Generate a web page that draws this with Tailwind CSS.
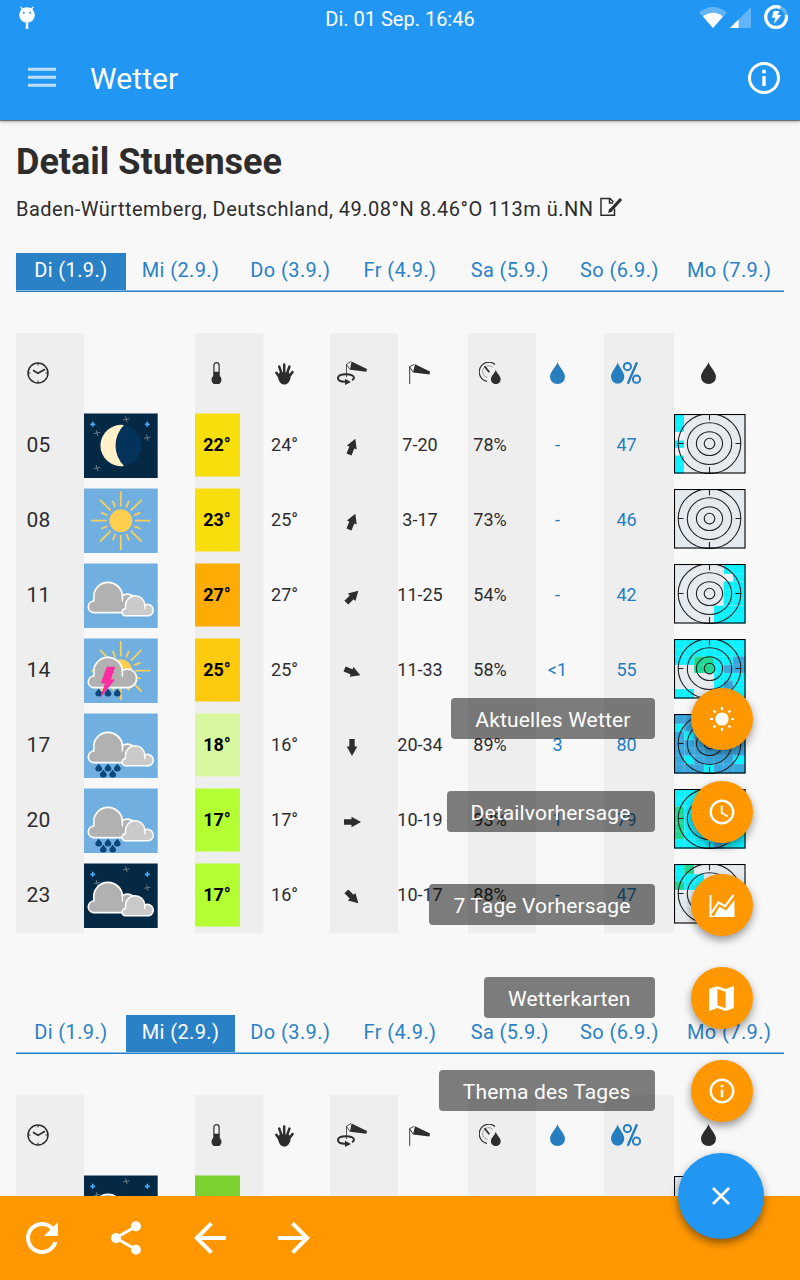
<!DOCTYPE html>
<html lang="de">
<head>
<meta charset="utf-8">
<meta name="viewport" content="width=device-width, initial-scale=1">
<title>Wetter</title>
<script src="https://cdn.jsdelivr.net/npm/@tailwindcss/browser@4"></script>
</head>
<body class="bg-[#f8f8f8]">
<svg width="0" height="0" class="absolute">
  <defs>
    <symbol id="drop" viewBox="0 0 15 22"><path d="M7.500 0C8.400 4.500 15 9.500 15 14.800A7.500 7.200 0 0 1 0 14.800C0 9.500 6.600 4.500 7.500 0Z" fill="currentColor"/></symbol>
    <symbol id="clock" viewBox="0 0 22 22"><g fill="none" stroke="currentColor"><circle cx="11" cy="11" r="10" stroke-width="1.500"/><path d="M6 8.200 11 11.200 18 7.200" stroke-width="1.700"/><path d="M11 1v2.500M11 18.500V21M1 11h2.500M18.500 11H21" stroke-width="1"/></g></symbol>
    <symbol id="thermo" viewBox="0 0 11 22"><path d="M2.900 14V3.200a2.600 2.600 0 0 1 5.200 0V14" fill="none" stroke="currentColor" stroke-width="1.200"/><path d="M2.800 9.800h5.400v3.600a5 5 0 1 1-5.400 0Z" fill="currentColor"/></symbol>
    <symbol id="hand" viewBox="0 0 19 22"><g fill="none" stroke="currentColor" stroke-linecap="round" stroke-width="2.500"><path d="M1.400 9.700 5 15"/><path d="M4.200 3.600 6.800 11"/><path d="M9.200 1.600V10"/><path d="M14.400 3.600 11.800 11"/><path d="M17.500 9 13.500 14.500"/></g><path d="M4.300 9.500h10l1.200 5.500C14.600 19 12.500 21.500 9.300 21.500S3.800 19 3 14Z" fill="currentColor"/></symbol>
    <symbol id="sock" viewBox="0 0 22 20"><path d="M6 .3 21 7.500l-.5 2.900L4 8.400Z" fill="currentColor"/><path d="M.7 20V2.600L5.200.4M.7 2.900 4 8" fill="none" stroke="currentColor" stroke-width=".9"/></symbol>
    <symbol id="sockturn" viewBox="0 0 30 24"><path d="M14.500.6 30 8l-.6 2.800L13 8.800Z" fill="currentColor"/><path d="M9.500 16V3.200L14 .5M9.500 3.500 13 8.500" fill="none" stroke="currentColor" stroke-width=".8"/><path d="M8 20.800C3.500 20.700 1 19.200 1 17c0-2.300 3.500-3.800 8-3.800s8 1.500 8 3.500c0 1-.8 1.800-2 2.400" fill="none" stroke="currentColor" stroke-width="2"/><path d="M8 17.800 14 21l-6 2.900Z" fill="currentColor"/></symbol>
    <symbol id="gauge" viewBox="0 0 22 22"><g fill="none" stroke="currentColor"><path d="M16 2.500A9.600 9.600 0 1 0 8 19.300" stroke-width="1.200"/><path d="M14 5.500A6 6 0 1 0 8.500 15.500" stroke-width=".7" opacity=".6"/><path d="M5.500 4.200 10.300 10.300" stroke-width="1.800"/></g><path d="M16.800 7.800c.6 3 4.900 6.200 4.900 9.600a4.900 4.700 0 0 1-9.800 0c0-3.400 4.300-6.600 4.900-9.600Z" fill="currentColor"/></symbol>
    <symbol id="droppct" viewBox="0 0 30 22"><path d="M6.700.3c.8 4.300 6.600 9.300 6.600 14.500a6.600 7 0 0 1-13.300 0C0 9.600 5.900 4.600 6.700.3Z" fill="currentColor"/><g fill="none" stroke="currentColor" stroke-width="2"><circle cx="16.400" cy="4.600" r="3.600"/><circle cx="25.500" cy="17.200" r="3.600"/><path d="M26 .3 16.800 21.800" stroke-width="2.400"/></g></symbol>
    <symbol id="arrow" viewBox="0 0 12 18"><path d="M6 0 11.300 9.500H8.700V17H3.300V9.500H.7Z" fill="currentColor"/></symbol>

    <g id="day"><rect width="73.700" height="64.500" y=".5" fill="#70afe0"/></g>
    <g id="x"><path d="M-3.200.6 3.200-.6M-.8-3 .8 3" stroke="#7f8b96" stroke-width=".8"/></g>
    <g id="plus"><path d="M-2.500 0h5M0-2.500v5" stroke="#4aa8f5" stroke-width="1.700"/></g>
    <g id="night"><rect width="73.700" height="64.500" y=".5" fill="#052844"/><use href="#plus" x="8.700" y="11.300"/><use href="#plus" x="63.300" y="11.300"/><use href="#x" x="42.300" y="6.300"/><use href="#x" x="13" y="20"/><use href="#x" x="63.300" y="24.700"/></g>
    <g id="quarter" stroke="#f9d05c" stroke-width="1.800" stroke-linecap="round"><path d="M0-15V-28.800M5.700-14 7.800-19M14-5.800 19-7.800M10.600-10.600 20.300-20.300"/></g>
    <g id="sunrays"><use href="#quarter"/><use href="#quarter" transform="rotate(90)"/><use href="#quarter" transform="rotate(180)"/><use href="#quarter" transform="rotate(270)"/><circle r="11.400" fill="#ffcf50"/></g>
    <g id="bigcloud"><path d="M9.200 49.700A5.900 5.900 0 0 1 9.800 38V35A14.300 14.300 0 0 1 38.400 32.500A9.300 9.300 0 1 1 42.700 49.700Z" fill="#b1b1b1" stroke="#fff" stroke-width="1.700"/><path d="M38.400 32v6" stroke="#fff" stroke-width="1.500" stroke-linecap="round"/></g>
    <g id="smallcloud"><path d="M41 52.800a3.700 3.700 0 0 1 .5-7.300V42.500A9.500 9.500 0 0 1 60.700 42A5.800 5.800 0 1 1 64.500 52.800Z" fill="#cacaca" stroke="#fff" stroke-width="1.500"/><path d="M60.800 41.500v4.300" stroke="#fff" stroke-width="1.400" stroke-linecap="round"/></g>
    <g id="rd"><path d="M0-4C.6-2.300 3.400-1 3.400 1.100a3.400 3 0 0 1-6.800 0C-3.400-1-.6-2.300 0-4Z" fill="#0a477c"/></g>
    <g id="rain3"><use href="#rd" x="14.700" y="54.500"/><use href="#rd" x="24" y="54.500"/><use href="#rd" x="33.300" y="54.500"/></g>
    <g id="rain5"><use href="#rain3"/><use href="#rd" x="19.300" y="60.500"/><use href="#rd" x="28.700" y="60.500"/></g>

    <symbol id="w-moon" viewBox="0 0 74 65"><use href="#night"/><use href="#x" x="13" y="55"/><circle cx="36.800" cy="32.500" r="20.700" fill="#03335a"/><path d="M40 12A20.700 20.700 0 1 0 40 53A29 29 0 0 1 40 12Z" fill="#fff0c8"/></symbol>
    <symbol id="w-sun" viewBox="0 0 74 65"><use href="#day"/><use href="#sunrays" x="36.800" y="32.700"/></symbol>
    <symbol id="w-cloud" viewBox="0 0 74 65"><use href="#day"/><use href="#bigcloud"/><use href="#smallcloud"/></symbol>
    <symbol id="w-storm" viewBox="0 0 74 65"><use href="#day"/><use href="#sunrays" x="36.800" y="32.700"/><use href="#bigcloud"/><use href="#rain3"/><path d="M22.700 28.700h8.600L26.800 41.500H31L16 60.300l5-15h-4.300Z" fill="#ff2d9f"/></symbol>
    <symbol id="w-rain" viewBox="0 0 74 65"><use href="#day"/><use href="#bigcloud"/><use href="#smallcloud"/><use href="#rain5"/></symbol>
    <symbol id="w-nightcloud" viewBox="0 0 74 65"><use href="#night"/><use href="#bigcloud"/><use href="#smallcloud"/></symbol>

    <g id="rings" fill="none" stroke="#222" stroke-width="1.100"><circle cx="35.500" cy="29.600" r="5.300"/><ellipse cx="35.500" cy="29.600" rx="13.100" ry="11.900"/><ellipse cx="35.500" cy="29.600" rx="22.200" ry="20.900"/><ellipse cx="35.500" cy="29.600" rx="31.300" ry="30"/><path d="M35.500 1v5.200M35.500 53v6M4 29.500h5.500M61.500 29.500H67"/></g>
    <g id="cells" fill="none" stroke="#fff" stroke-opacity=".22" stroke-width=".7"><path d="M10.500 1v58M20.500 1v58M30 1v58M40 1v58M49.500 1v58M59 1v58M1 10h70M1 17.700h70M1 26h70M1 34h70M1 41.700h70M1 50.200h70"/></g>
  </defs>
</svg>

<div class="relative flex h-[1280px] w-[800px] flex-col overflow-hidden bg-[#f8f8f8] font-['Roboto',sans-serif] text-[#2d2d2d]">

  <header class="relative z-10 h-[120px] shrink-0 bg-[#2196f3] text-white shadow-[0_1px_1px_rgba(0,0,0,0.45),0_2px_4px_rgba(0,0,0,0.25)]">
    <div class="grid h-[38px] grid-cols-3 items-center">
      <div class="pl-[18px]">
        <svg width="18" height="24" viewBox="0 0 18 24" class="mt-[-2px]"><circle cx="9" cy="9" r="7.800" fill="#fff"/><path d="M5 3.500 2.700 1M13 3.500 15.300 1" stroke="#fff" stroke-width="1.300"/><path d="M9 16.500V23" stroke="#fff" stroke-width="2.400"/><circle cx="5.800" cy="6.700" r="1" fill="#2196f3"/><circle cx="12.200" cy="6.700" r="1" fill="#2196f3"/></svg>
      </div>
      <div class="text-center text-[20px] leading-[38px]">Di. 01 Sep. 16:46</div>
      <div class="flex items-start justify-end self-start pt-[4px] pr-[11px]">
        <svg width="30" height="23" viewBox="0 0 30 23" class="mt-[2px]"><path d="M1 6.500Q15-4.500 29 6.500L15 22Z" fill="#fff" opacity=".3"/><path d="M5 10.500Q15 3 25 10.500L15 22Z" fill="#fff"/></svg>
        <svg width="22" height="23" viewBox="0 0 22 23" class="mt-[2px] ml-[1px]"><path d="M22 1v21H1Z" fill="#fff" opacity=".3"/><path d="M9.500 13.500V22H1Z" fill="#fff"/></svg>
        <svg width="26" height="26" viewBox="0 0 26 26" class="ml-[12px]"><circle cx="13" cy="13" r="10.400" fill="none" stroke="#fff" stroke-opacity=".3" stroke-width="3.200"/><path d="M17.500 3.600A10.400 10.400 0 1 0 23.300 11" fill="none" stroke="#fff" stroke-width="3.200"/><path d="M10.500 7h5.700l-1.300 4h3.400L11 20l1.300-6.300H9Z" fill="#fff"/></svg>
      </div>
    </div>
    <div class="flex h-[80px] items-center pr-[18px] pl-[28px]">
      <svg width="28" height="21" viewBox="0 0 28 21" class="mt-[-1px]"><g stroke="#fff" stroke-opacity=".7" stroke-width="3"><path d="M0 2.300h28M0 10.300h28M0 18.300h28"/></g></svg>
      <h2 class="mt-[2px] ml-[34px] text-[30px] leading-none tracking-[0.100px]">Wetter</h2>
      <svg width="36" height="36" viewBox="0 0 36 36" class="ml-auto"><circle cx="18" cy="18" r="14.500" fill="none" stroke="#fff" stroke-width="3"/><path d="M18 16v10M18 9.800v3.400" stroke="#fff" stroke-width="3.400"/></svg>
    </div>
  </header>

  <main class="min-h-0 flex-1 overflow-hidden px-4">
    <h1 class="mt-[21px] text-[36px] leading-[42px] font-bold">Detail Stutensee</h1>
    <div class="mt-[11px] flex h-[30px] items-center text-[20px] tracking-[0.480px]">
      <span>Baden-Württemberg, Deutschland, 49.08°N 8.46°O 113m ü.NN</span>
      <svg width="24" height="20" viewBox="0 0 24 20" class="mt-[-4px] ml-[6px]" fill="none" stroke="#2d2d2d"><path d="M14.500 11.500v6.700H1V1.500h9l3.500 3.500M9.500 1.500v4.500h3.500" stroke-width="1.500"/><path d="M21 2 10.500 13.500" stroke-width="3.200"/><path d="M9.300 11.500 8 16l4.500-1.500Z" fill="#2d2d2d" stroke="none"/></svg>
    </div>

    <div data-day="0" class="mt-[29px]"></div>
    <div data-day="1" class="mt-[82px]"></div>
  </main>

  <footer class="flex h-[84px] shrink-0 items-center bg-[#ff9800] text-white">
    <div class="flex w-[84px] justify-center"><svg width="48" height="48" viewBox="0 0 24 24" fill="currentColor"><path d="M17.650 6.350C16.200 4.900 14.210 4 12 4c-4.420 0-7.990 3.580-7.990 8s3.570 8 7.990 8c3.730 0 6.840-2.550 7.730-6h-2.080c-.82 2.330-3.040 4-5.650 4-3.310 0-6-2.690-6-6s2.690-6 6-6c1.660 0 3.140.69 4.220 1.780L13 11h7V4l-2.350 2.350z"/></svg></div>
    <div class="flex w-[84px] justify-center"><svg width="40" height="40" viewBox="0 0 24 24" fill="currentColor"><path d="M18 16.080c-.76 0-1.440.3-1.960.77L8.910 12.700c.05-.23.09-.46.09-.7s-.04-.47-.09-.7l7.050-4.110c.54.5 1.250.81 2.040.81 1.660 0 3-1.340 3-3s-1.340-3-3-3-3 1.340-3 3c0 .24.040.47.090.7L8.040 9.810C7.500 9.310 6.790 9 6 9c-1.660 0-3 1.340-3 3s1.340 3 3 3c.79 0 1.500-.31 2.040-.81l7.120 4.160c-.05.21-.08.43-.08.65 0 1.610 1.310 2.920 2.920 2.920s2.920-1.310 2.920-2.920-1.310-2.920-2.920-2.920z"/></svg></div>
    <div class="flex w-[84px] justify-center"><svg width="48" height="48" viewBox="0 0 24 24" fill="currentColor"><path d="M20 11H7.830l5.590-5.590L12 4l-8 8 8 8 1.410-1.410L7.830 13H20v-2z"/></svg></div>
    <div class="flex w-[84px] justify-center"><svg width="48" height="48" viewBox="0 0 24 24" fill="currentColor"><path d="M12 4l-1.410 1.410L16.170 11H4v2h12.170l-5.580 5.590L12 20l8-8z"/></svg></div>
  </footer>

  <!-- Speed dial -->
  <nav class="absolute top-[688px] right-[35.500px] z-20 flex w-[340px] flex-col text-[21px] tracking-[0.150px] whitespace-nowrap text-white">
    <div class="flex h-[93px] items-start justify-end pr-[12px]">
      <span class="mt-[10px] mr-[36px] flex h-[41px] items-center rounded-[4px] bg-black/50 px-[24px] pt-[4px]">Aktuelles Wetter</span>
      <span class="flex size-[62px] items-center justify-center rounded-full bg-[#ff9800] shadow-[0_4px_8px_rgba(0,0,0,0.4)]"><svg width="28" height="28" viewBox="0 0 28 28"><circle cx="14" cy="14" r="6.600" fill="#fff"/><path d="M14 2v3M14 23v3M2 14h3M23 14h3M5.500 5.500l2 2M20.500 20.500l2 2M5.500 22.500l2-2M20.500 7.500l2-2" stroke="#fff" stroke-width="2.200"/></svg></span>
    </div>
    <div class="flex h-[93px] items-start justify-end pr-[12px]">
      <span class="mt-[10px] mr-[36px] flex h-[41px] items-center rounded-[4px] bg-black/50 px-[24px] pt-[4px]">Detailvorhersage</span>
      <span class="flex size-[62px] items-center justify-center rounded-full bg-[#ff9800] shadow-[0_4px_8px_rgba(0,0,0,0.4)]"><svg width="30" height="30" viewBox="0 0 24 24" fill="#fff"><path d="M11.990 2C6.470 2 2 6.480 2 12s4.470 10 9.990 10C17.520 22 22 17.520 22 12S17.520 2 11.990 2zM12 20c-4.420 0-8-3.580-8-8s3.580-8 8-8 8 3.580 8 8-3.580 8-8 8zm.5-13H11v6l5.250 3.150.75-1.230-4.500-2.670z"/></svg></span>
    </div>
    <div class="flex h-[93px] items-start justify-end pr-[12px]">
      <span class="mt-[10px] mr-[36px] flex h-[41px] items-center rounded-[4px] bg-black/50 px-[24px] pt-[4px]">7 Tage Vorhersage</span>
      <span class="flex size-[62px] items-center justify-center rounded-full bg-[#ff9800] shadow-[0_4px_8px_rgba(0,0,0,0.4)]"><svg width="26" height="26" viewBox="0 0 26 26"><path d="M1.500 25V3" stroke="#fff" stroke-width="2"/><path d="M2 21.500 9.500 10.500l6.500 3.800L24.500 3" fill="none" stroke="#fff" stroke-width="2.200"/><path d="M.5 25v-1.500L5 24 10.500 14.500l6.500 4L25.500 8V25Z" fill="#fff"/></svg></span>
    </div>
    <div class="flex h-[93px] items-start justify-end pr-[12px]">
      <span class="mt-[10px] mr-[36px] flex h-[41px] items-center rounded-[4px] bg-black/50 px-[24px] pt-[4px]">Wetterkarten</span>
      <span class="flex size-[62px] items-center justify-center rounded-full bg-[#ff9800] shadow-[0_4px_8px_rgba(0,0,0,0.4)]"><svg width="33" height="33" viewBox="0 0 24 24" fill="#fff"><path d="M20.500 3l-.16.030L15 5.100 9 3 3.360 4.900c-.21.070-.36.250-.36.480V20.500c0 .28.220.5.500.5l.16-.03L9 18.900l6 2.100 5.640-1.900c.21-.07.36-.25.36-.48V3.500c0-.28-.22-.5-.5-.5zM15 19l-6-2.110V5l6 2.110V19z"/></svg></span>
    </div>
    <div class="flex h-[93px] items-start justify-end pr-[12px]">
      <span class="mt-[10px] mr-[36px] flex h-[41px] items-center rounded-[4px] bg-black/50 px-[24px] pt-[4px]">Thema des Tages</span>
      <span class="flex size-[62px] items-center justify-center rounded-full bg-[#ff9800] shadow-[0_4px_8px_rgba(0,0,0,0.4)]"><svg width="30" height="30" viewBox="0 0 24 24" fill="#fff"><path d="M11 17h2v-6h-2v6zm1-15C6.480 2 2 6.480 2 12s4.480 10 10 10 10-4.480 10-10S17.520 2 12 2zm0 18c-4.410 0-8-3.590-8-8s3.590-8 8-8 8 3.590 8 8-3.590 8-8 8zM11 9h2V7h-2v2z"/></svg></span>
    </div>
    <div class="flex justify-end pr-[0.500px]">
      <span class="flex size-[86px] items-center justify-center rounded-full bg-[#2196f3] shadow-[0_4px_9px_rgba(0,0,0,0.45)]"><svg width="18" height="18" viewBox="0 0 18 18"><path d="M1 1l16 16M17 1 1 17" stroke="#fff" stroke-width="2.700"/></svg></span>
    </div>
  </nav>
</div>

<script>
const tabs = ['Di (1.9.)', 'Mi (2.9.)', 'Do (3.9.)', 'Fr (4.9.)', 'Sa (5.9.)', 'So (6.9.)', 'Mo (7.9.)'];
const C = '#0cf0ff', B = '#38a5dd', G = '#1fd790', W = '#f0f3f6';
// Radar cells: [colour, left, top, right, bottom]
const days = [[
  ['05', 'moon', '22°', 'bg-[#f8de0b]', '24°', 22, '7-20', '78%', '-', '47', [[C,0,0,10,18],[W,0,18,10,26.500],[C,0,26.500,10,34],[W,0,34,10,41.500],[C,0,41.500,10,60]]],
  ['08', 'sun', '23°', 'bg-[#f8de0b]', '25°', 22, '3-17', '73%', '-', '46', []],
  ['11', 'cloud', '27°', 'bg-[#feab06]', '27°', 45, '11-25', '54%', '-', '42', [[C,50,0,72,17.500],[C,59,10,72,17.500],[W,50,10,59,17.500],[C,49.500,17.500,72,41.500],[C,40,41.500,72,60]]],
  ['14', 'storm', '25°', 'bg-[#fdca0d]', '25°', 112, '11-33', '58%', '&lt;1', '55', [[C,0,0,72,26],[C,40,26,72,60],[G,20,17.500,40,34],[B,59,17.500,72,26],[B,49.500,26,72,34],[B,49.500,41.500,59,50],[C,0,50,20,60]]],
  ['17', 'rain', '18°', 'bg-[#d8f8a0]', '16°', 180, '20-34', '89%', '3', '80', [[B,0,0,72,60],[C,0,10,10,17.500],[C,10,17.500,20,26],[C,10,41.500,20,50],[C,30,50,40,60],[C,59,41.500,72,50]]],
  ['20', 'rain', '17°', 'bg-[#b4ff33]', '17°', 90, '10-19', '93%', '1', '79', [[C,0,0,72,60],[G,0,17.500,10,50],[B,40,50,50,60]]],
  ['23', 'nightcloud', '17°', 'bg-[#b4ff33]', '16°', 135, '10-17', '88%', '-', '47', [[C,0,0,10,26],[C,10,10,30,26],[G,10,0,20,10],[G,0,17.500,10,26]]]
], [
  ['02', 'nightcloud', '15°', 'bg-[#7bd130]', '15°', 180, '5-12', '90%', '-', '20', []]
]];
const icon = (id, w, h, cls) => `<svg width="${w}" height="${h}" class="${cls}"><use href="#${id}"/></svg>`;
const cell = (bg, inner) => `<div class="${bg}"><div class="flex h-[75px] w-[44px] items-center justify-center pb-[2px] whitespace-nowrap">${inner}</div></div>`;
const grey = 'bg-[#eee]', none = 'bg-transparent';
const head = `<div class="grid grid-cols-[68px_111px_68px_67px_68px_70px_68px_68px_70px_110px]">
  ${cell(grey, icon('clock', 22, 22, 'mt-[7px]'))}
  <div></div>
  ${cell(grey, icon('thermo', 11, 22, 'mt-[7px] mr-[1px]'))}
  ${cell(none, icon('hand', 19, 22, 'mt-[8px] mr-[2px]'))}
  ${cell(grey, icon('sockturn', 30, 24, 'mt-[7px]'))}
  ${cell(none, icon('sock', 22, 20, 'mt-[9px] mr-[1px]'))}
  ${cell(grey, icon('gauge', 22, 22, 'mt-[7px] mr-[1px]'))}
  ${cell(none, icon('drop', 15, 22, 'mt-[7px] mr-[2px] text-[#267ebf]'))}
  ${cell(grey, icon('droppct', 30, 22, 'mt-[7px] text-[#267ebf]'))}
  <div class="pt-[29px] pl-[27px]">${icon('drop', 15, 22, '')}</div></div>`;
const row = ([h, w, t, tc, felt, dir, wind, hum, mm, pct, radar]) => `<div class="grid grid-cols-[68px_111px_68px_67px_68px_70px_68px_68px_70px_110px] text-[18px]">
  ${cell(grey, `<span class="pt-[3px] pl-[1px] text-[21px] tracking-[0.200px]">${h}</span>`)}
  <div class="pt-[5px]">${icon('w-' + w, 74, 65, '')}</div>
  <div class="${grey} h-[75px] pt-[5px]"><div class="${tc} flex h-[64px] w-[45px] items-center justify-center border-y border-[#eee]/50 pr-[1px] pb-[2px] font-bold text-black">${t}</div></div>
  ${cell(none, `<span class="pr-[1px]">${felt}</span>`)}
  ${cell(grey, `<svg width="12" height="18" class="mt-[4px] mr-[1px]" style="transform:rotate(${dir}deg)"><use href="#arrow"/></svg>`)}
  ${cell(none, wind)}
  ${cell(grey, hum)}
  ${cell(none, `<span class="pr-[1px] text-[#267ebf]">${mm}</span>`)}
  ${cell(grey, `<span class="pl-[1px] text-[#267ebf]">${pct}</span>`)}
  <div class="pt-[6px]"><svg width="72" height="60" viewBox="0 0 72 60"><rect width="71.500" height="59.500" fill="#e5eaef"/>${radar.map(([c, l, t, r, b]) => `<rect x="${l}" y="${t}" width="${Math.min(r, 71.500) - l}" height="${Math.min(b, 59.500) - t}" fill="${c}"/>`).join('')}${radar.length ? '<use href="#cells"/>' : ''}<use href="#rings"/><rect x=".5" y=".5" width="70.500" height="58.500" fill="none" stroke="#000" stroke-width="1.100"/></svg></div></div>`;
document.querySelectorAll('[data-day]').forEach(el => {
  const d = +el.dataset.day;
  el.innerHTML = `<div class="grid h-[37px] grid-cols-7 text-[20px] tracking-[0.400px] text-[#2a81c6]">
    ${tabs.map((t, i) => `<div class="${i === d ? 'bg-[#2a81c6] text-white' : 'bg-transparent'} flex items-center justify-center pb-[3px] whitespace-nowrap">${t}</div>`).join('')}</div>
    <div class="h-px bg-[#86b7de]"></div><div class="h-px bg-[#2a81c6]"></div>
    <div class="mt-[41px]">${head}${days[d].map(row).join('')}</div>`;
});
</script>
</body>
</html>
